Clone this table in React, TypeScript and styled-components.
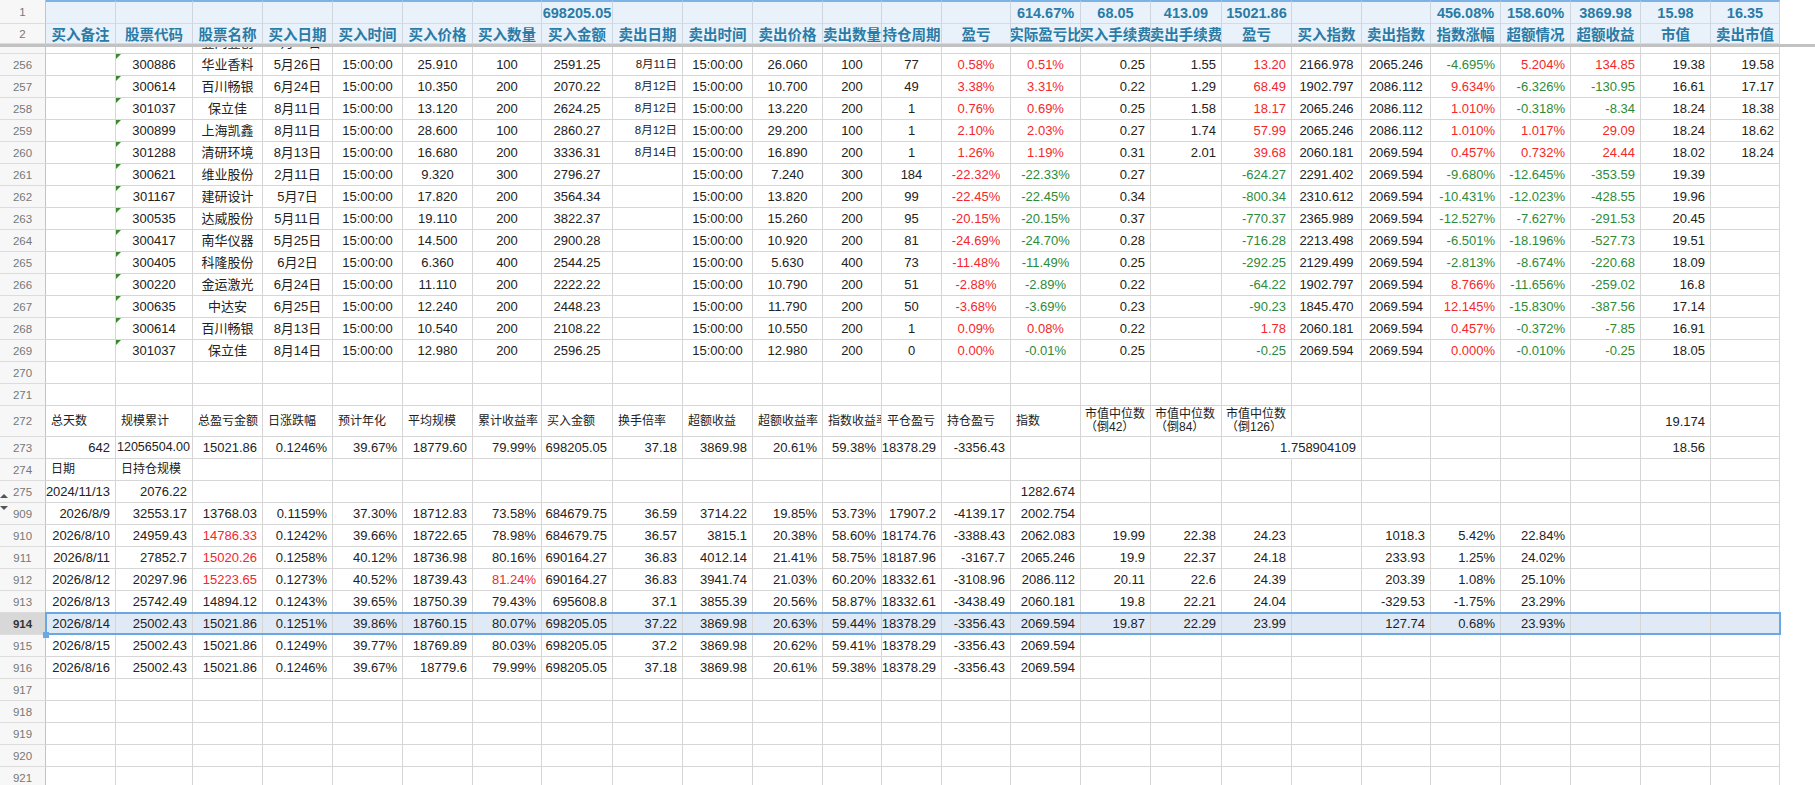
import React from 'react';
import styled, { createGlobalStyle, css } from 'styled-components';

type Align = 'left' | 'center' | 'right';
type Tone = 'red' | 'green';

interface CellSpec {
  v: string;
  align?: Align;
  tone?: Tone;
  size?: number;
  wrap?: boolean;
  flag?: boolean;
  bleed?: boolean;
  open?: boolean;
  tight?: boolean;
}

const LETTERS = 'ABCDEFGHIJKLMNOPQRSTUVWXY'.split('');
const COL_WIDTHS = [70, 77, 70, 70, 70, 70, 69, 71, 70, 70, 70, 59, 60, 69, 70, 70, 71, 70, 70, 69, 70, 70, 70, 70, 69];
const ROW_HEAD = 46;
const TABLE_W = ROW_HEAD + COL_WIDTHS.reduce((a, b) => a + b, 0);
const TEMPLATE = `${ROW_HEAD}px ${COL_WIDTHS.map((w) => `${w}px`).join(' ')}`;

const GRID = '#d6d6d6';
const RED = '#f3272c';
const GREEN = '#2d8a3a';
const HEAD_TEXT = '#2a7ba6';
const HEAD_BG = '#e9f2fb';
const SELECT = '#6aa8e3';
const SELECT_BG = '#e0eaf6';

const GlobalStyle = createGlobalStyle`
  html, body {
    margin: 0;
    padding: 0;
    background: #fff;
  }
  body {
    font-family: "Liberation Sans", Arial, "Noto Sans CJK SC", sans-serif;
    overflow: hidden;
  }
`;

const Sheet = styled.div`
  width: 1815px;
  height: 785px;
  overflow: hidden;
  display: flex;
  flex-direction: column;
  background: #fff;
  color: #222;
`;

const Frozen = styled.div`
  flex: none;
`;

const FreezeLine = styled.div`
  flex: none;
  height: 3px;
  background: #c2c2c2;
`;

const Body = styled.div`
  flex: 1;
  min-height: 0;
  overflow: hidden;
  display: flex;
  flex-direction: column;
`;

const Row = styled.div<{ $h: number; $selected?: boolean; $shift?: number }>`
  flex: none;
  display: grid;
  grid-template-columns: ${TEMPLATE};
  width: ${TABLE_W}px;
  height: ${(p) => p.$h}px;
  margin-top: ${(p) => p.$shift ?? 0}px;
  position: relative;

  ${(p) =>
    p.$selected &&
    css`
      &::after {
        content: '';
        position: absolute;
        left: ${ROW_HEAD - 1}px;
        top: -1px;
        right: -1px;
        bottom: 0;
        border: 2px solid ${SELECT};
        pointer-events: none;
        z-index: 3;
      }
      &::before {
        content: '';
        position: absolute;
        left: ${ROW_HEAD - 3}px;
        bottom: -3px;
        width: 6px;
        height: 6px;
        background: ${SELECT};
        z-index: 4;
      }
    `}
`;

const RowNum = styled.div<{ $active?: boolean; $marker?: 'up' | 'down' }>`
  box-sizing: border-box;
  display: flex;
  align-items: center;
  justify-content: center;
  position: relative;
  background: ${(p) => (p.$active ? '#d8d8d8' : '#f7f7f7')};
  border-right: 1px solid #c4c4c4;
  border-bottom: 1px solid #dcdcdc;
  color: ${(p) => (p.$active ? '#333' : '#777')};
  font-size: 11.5px;
  font-weight: ${(p) => (p.$active ? 700 : 400)};

  ${(p) =>
    p.$marker &&
    css`
      &::before {
        content: '';
        position: absolute;
        left: 0;
        width: 0;
        height: 0;
        border-left: 4px solid transparent;
        border-right: 4px solid transparent;
        ${p.$marker === 'up'
          ? css`
              bottom: 4px;
              border-bottom: 4px solid #555;
            `
          : css`
              top: 3px;
              border-top: 4px solid #555;
            `}
      }
    `}
`;

const justify = (a: Align) => (a === 'left' ? 'flex-start' : a === 'right' ? 'flex-end' : 'center');

const Cell = styled.div<{
  $align: Align;
  $tone?: Tone;
  $size: number;
  $wrap?: boolean;
  $flag?: boolean;
  $bleed?: boolean;
  $open?: boolean;
  $tight?: boolean;
  $selected?: boolean;
}>`
  box-sizing: border-box;
  display: flex;
  align-items: center;
  justify-content: ${(p) => justify(p.$align)};
  position: relative;
  padding: 0 ${(p) => (p.$tight ? 2 : p.$wrap ? 4 : 5)}px;
  background: ${(p) => (p.$selected ? SELECT_BG : '#fff')};
  border-right: 1px solid ${(p) => (p.$open ? 'transparent' : GRID)};
  border-bottom: 1px solid ${GRID};
  color: ${(p) => (p.$tone === 'red' ? RED : p.$tone === 'green' ? GREEN : '#222')};
  font-size: ${(p) => p.$size}px;
  line-height: 13px;
  white-space: ${(p) => (p.$wrap ? 'normal' : 'nowrap')};
  overflow: ${(p) => (p.$bleed ? 'visible' : 'hidden')};

  ${(p) =>
    p.$flag &&
    css`
      &::before {
        content: '';
        position: absolute;
        left: 0;
        top: 0;
        border-top: 5px solid #3b8a2e;
        border-right: 5px solid transparent;
      }
    `}
`;

const HeadCell = styled.div<{ $top?: boolean; $size: number }>`
  box-sizing: border-box;
  display: flex;
  align-items: center;
  justify-content: center;
  overflow: hidden;
  white-space: nowrap;
  background: ${HEAD_BG};
  border-top: ${(p) => (p.$top ? `2px solid #7cb2e4` : 'none')};
  border-right: 1px solid #cdd5de;
  border-bottom: 1px solid #d3dce6;
  color: ${HEAD_TEXT};
  font-size: ${(p) => p.$size}px;
  font-weight: 700;
`;

/* ---------- data ---------- */

const HEAD_VALUES: Record<string, string> = {
  H: '698205.05',
  O: '614.67%',
  P: '68.05',
  Q: '413.09',
  R: '15021.86',
  U: '456.08%',
  V: '158.60%',
  W: '3869.98',
  X: '15.98',
  Y: '16.35',
};

const HEAD_LABELS = [
  '买入备注', '股票代码', '股票名称', '买入日期', '买入时间', '买入价格', '买入数量', '买入金额',
  '卖出日期', '卖出时间', '卖出价格', '卖出数量', '持仓周期', '盈亏', '实际盈亏比', '买入手续费',
  '卖出手续费', '盈亏', '买入指数', '卖出指数', '指数涨幅', '超额情况', '超额收益', '市值', '卖出市值',
];

const TRADE_ALIGN: Align[] = [
  'left', 'center', 'center', 'center', 'center', 'center', 'center', 'center',
  'right', 'center', 'center', 'center', 'center', 'center', 'center', 'right',
  'right', 'right', 'center', 'center', 'right', 'right', 'right', 'right', 'right',
];
// O, R, U, V, W take their colour from the sign; N is always red
const SIGNED = new Set([14, 17, 20, 21, 22]);

const TRADES: [number, string][] = [
  [255, '_ 300792 壹网壹创 7月30日 15:00:00 21.400 100 2140.25 8月10日 15:00:00 21.900 100 11 2.34% 2.26% 0.21 1.56 48.23 2009.771 2062.083 2.603% -0.263% -5.62 17.94 18.36'],
  [256, '_ 300886 华业香料 5月26日 15:00:00 25.910 100 2591.25 8月11日 15:00:00 26.060 100 77 0.58% 0.51% 0.25 1.55 13.20 2166.978 2065.246 -4.695% 5.204% 134.85 19.38 19.58'],
  [257, '_ 300614 百川畅银 6月24日 15:00:00 10.350 200 2070.22 8月12日 15:00:00 10.700 200 49 3.38% 3.31% 0.22 1.29 68.49 1902.797 2086.112 9.634% -6.326% -130.95 16.61 17.17'],
  [258, '_ 301037 保立佳 8月11日 15:00:00 13.120 200 2624.25 8月12日 15:00:00 13.220 200 1 0.76% 0.69% 0.25 1.58 18.17 2065.246 2086.112 1.010% -0.318% -8.34 18.24 18.38'],
  [259, '_ 300899 上海凯鑫 8月11日 15:00:00 28.600 100 2860.27 8月12日 15:00:00 29.200 100 1 2.10% 2.03% 0.27 1.74 57.99 2065.246 2086.112 1.010% 1.017% 29.09 18.24 18.62'],
  [260, '_ 301288 清研环境 8月13日 15:00:00 16.680 200 3336.31 8月14日 15:00:00 16.890 200 1 1.26% 1.19% 0.31 2.01 39.68 2060.181 2069.594 0.457% 0.732% 24.44 18.02 18.24'],
  [261, '_ 300621 维业股份 2月11日 15:00:00 9.320 300 2796.27 _ 15:00:00 7.240 300 184 -22.32% -22.33% 0.27 _ -624.27 2291.402 2069.594 -9.680% -12.645% -353.59 19.39 _'],
  [262, '_ 301167 建研设计 5月7日 15:00:00 17.820 200 3564.34 _ 15:00:00 13.820 200 99 -22.45% -22.45% 0.34 _ -800.34 2310.612 2069.594 -10.431% -12.023% -428.55 19.96 _'],
  [263, '_ 300535 达威股份 5月11日 15:00:00 19.110 200 3822.37 _ 15:00:00 15.260 200 95 -20.15% -20.15% 0.37 _ -770.37 2365.989 2069.594 -12.527% -7.627% -291.53 20.45 _'],
  [264, '_ 300417 南华仪器 5月25日 15:00:00 14.500 200 2900.28 _ 15:00:00 10.920 200 81 -24.69% -24.70% 0.28 _ -716.28 2213.498 2069.594 -6.501% -18.196% -527.73 19.51 _'],
  [265, '_ 300405 科隆股份 6月2日 15:00:00 6.360 400 2544.25 _ 15:00:00 5.630 400 73 -11.48% -11.49% 0.25 _ -292.25 2129.499 2069.594 -2.813% -8.674% -220.68 18.09 _'],
  [266, '_ 300220 金运激光 6月24日 15:00:00 11.110 200 2222.22 _ 15:00:00 10.790 200 51 -2.88% -2.89% 0.22 _ -64.22 1902.797 2069.594 8.766% -11.656% -259.02 16.8 _'],
  [267, '_ 300635 中达安 6月25日 15:00:00 12.240 200 2448.23 _ 15:00:00 11.790 200 50 -3.68% -3.69% 0.23 _ -90.23 1845.470 2069.594 12.145% -15.830% -387.56 17.14 _'],
  [268, '_ 300614 百川畅银 8月13日 15:00:00 10.540 200 2108.22 _ 15:00:00 10.550 200 1 0.09% 0.08% 0.22 _ 1.78 2060.181 2069.594 0.457% -0.372% -7.85 16.91 _'],
  [269, '_ 301037 保立佳 8月14日 15:00:00 12.980 200 2596.25 _ 15:00:00 12.980 200 0 0.00% -0.01% 0.25 _ -0.25 2069.594 2069.594 0.000% -0.010% -0.25 18.05 _'],
];

// "!" marks a value shown in red
const DAILY: [number, string][] = [
  [909, '2026/8/9 32553.17 13768.03 0.1159% 37.30% 18712.83 73.58% 684679.75 36.59 3714.22 19.85% 53.73% 17907.2 -4139.17 2002.754'],
  [910, '2026/8/10 24959.43 !14786.33 0.1242% 39.66% 18722.65 78.98% 684679.75 36.57 3815.1 20.38% 58.60% 18174.76 -3388.43 2062.083 19.99 22.38 24.23 _ 1018.3 5.42% 22.84%'],
  [911, '2026/8/11 27852.7 !15020.26 0.1258% 40.12% 18736.98 80.16% 690164.27 36.83 4012.14 21.41% 58.75% 18187.96 -3167.7 2065.246 19.9 22.37 24.18 _ 233.93 1.25% 24.02%'],
  [912, '2026/8/12 20297.96 !15223.65 0.1273% 40.52% 18739.43 !81.24% 690164.27 36.83 3941.74 21.03% 60.20% 18332.61 -3108.96 2086.112 20.11 22.6 24.39 _ 203.39 1.08% 25.10%'],
  [913, '2026/8/13 25742.49 14894.12 0.1243% 39.65% 18750.39 79.43% 695608.8 37.1 3855.39 20.56% 58.87% 18332.61 -3438.49 2060.181 19.8 22.21 24.04 _ -329.53 -1.75% 23.29%'],
  [914, '2026/8/14 25002.43 15021.86 0.1251% 39.86% 18760.15 80.07% 698205.05 37.22 3869.98 20.63% 59.44% 18378.29 -3356.43 2069.594 19.87 22.29 23.99 _ 127.74 0.68% 23.93%'],
  [915, '2026/8/15 25002.43 15021.86 0.1249% 39.77% 18769.89 80.03% 698205.05 37.2 3869.98 20.62% 59.41% 18378.29 -3356.43 2069.594'],
  [916, '2026/8/16 25002.43 15021.86 0.1246% 39.67% 18779.6 79.99% 698205.05 37.18 3869.98 20.61% 59.38% 18378.29 -3356.43 2069.594'],
];

const SELECTED_ROW = 914;

function tradeRow(s: string): CellSpec[] {
  return s.split(' ').map((raw, i) => {
    const v = raw === '_' ? '' : raw;
    let tone: Tone | undefined;
    if (v && i === 13) tone = 'red';
    if (v && SIGNED.has(i)) tone = v.startsWith('-') ? 'green' : 'red';
    return { v, align: TRADE_ALIGN[i], tone, flag: i === 1, size: i === 8 ? 11.5 : 13 };
  });
}

function dailyRow(s: string): CellSpec[] {
  const vals = s.split(' ');
  return LETTERS.map((_, i) => {
    const raw = vals[i] ?? '_';
    if (raw === '_') return { v: '' };
    const red = raw.startsWith('!');
    return { v: red ? raw.slice(1) : raw, align: 'right' as Align, tone: red ? ('red' as Tone) : undefined };
  });
}

function sparse(entries: Record<string, string | CellSpec>, base: Partial<CellSpec> = {}): CellSpec[] {
  return LETTERS.map((l) => {
    const e = entries[l];
    if (e === undefined) return { v: '' };
    return typeof e === 'string' ? { ...base, v: e } : { ...base, ...e };
  });
}

const blank = () => sparse({});

const label = (v: string): CellSpec => ({ v, align: 'left', size: 12 });
const median = (v: string): CellSpec => ({ v, align: 'left', size: 12, wrap: true });

const TOTAL_LABELS = sparse({
  A: label('总天数'),
  B: label('规模累计'),
  C: label('总盈亏金额'),
  D: label('日涨跌幅'),
  E: label('预计年化'),
  F: label('平均规模'),
  G: label('累计收益率'),
  H: label('买入金额'),
  I: label('换手倍率'),
  J: label('超额收益'),
  K: label('超额收益率'),
  L: label('指数收益率'),
  M: label('平仓盈亏'),
  N: label('持仓盈亏'),
  O: label('指数'),
  P: median('市值中位数（倒42）'),
  Q: median('市值中位数（倒84）'),
  R: median('市值中位数（倒126）'),
  X: '19.174',
}, { align: 'right' });

const TOTAL_VALUES = sparse({
  A: '642',
  B: { v: '12056504.00', size: 12.5, tight: true },
  C: '15021.86',
  D: '0.1246%',
  E: '39.67%',
  F: '18779.60',
  G: '79.99%',
  H: '698205.05',
  I: '37.18',
  J: '3869.98',
  K: '20.61%',
  L: '59.38%',
  M: '18378.29',
  N: '-3356.43',
  R: { v: '', open: true },
  S: { v: '1.758904109', bleed: true },
  X: '18.56',
}, { align: 'right' });

const DAILY_HEAD = sparse({ A: label('日期'), B: label('日持仓规模') });
const DAILY_START = sparse({ A: '2024/11/13', B: '2076.22', O: '1282.674' }, { align: 'right' });

/* ---------- components ---------- */

function DataRow({
  num,
  cells,
  height = 22,
  shift,
  marker,
}: {
  num: number;
  cells: CellSpec[];
  height?: number;
  shift?: number;
  marker?: 'up' | 'down';
}) {
  const selected = num === SELECTED_ROW;
  return (
    <Row $h={height} $selected={selected} $shift={shift}>
      <RowNum $active={selected} $marker={marker}>
        {num}
      </RowNum>
      {cells.map((c, i) => (
        <Cell
          key={i}
          $align={c.align ?? 'right'}
          $tone={c.tone}
          $size={c.size ?? 13}
          $wrap={c.wrap}
          $flag={c.flag}
          $bleed={c.bleed}
          $open={c.open}
          $tight={c.tight}
          $selected={selected}
        >
          {c.v}
        </Cell>
      ))}
    </Row>
  );
}

function HeaderRows() {
  return (
    <Frozen>
      <Row $h={24}>
        <RowNum>1</RowNum>
        {LETTERS.map((l) => (
          <HeadCell key={l} $top $size={14.5}>
            {HEAD_VALUES[l] ?? ''}
          </HeadCell>
        ))}
      </Row>
      <Row $h={20}>
        <RowNum>2</RowNum>
        {HEAD_LABELS.map((t, i) => (
          <HeadCell key={i} $size={14.5}>
            {t}
          </HeadCell>
        ))}
      </Row>
    </Frozen>
  );
}

export default function App() {
  return (
    <>
      <GlobalStyle />
      <Sheet>
        <HeaderRows />
        <FreezeLine />
        <Body>
          {TRADES.map(([n, s], i) => (
            <DataRow key={n} num={n} cells={tradeRow(s)} shift={i === 0 ? -15 : 0} />
          ))}
          <DataRow num={270} cells={blank()} />
          <DataRow num={271} cells={blank()} />
          <DataRow num={272} cells={TOTAL_LABELS} height={31} />
          <DataRow num={273} cells={TOTAL_VALUES} />
          <DataRow num={274} cells={DAILY_HEAD} />
          <DataRow num={275} cells={DAILY_START} marker="up" />
          {DAILY.map(([n, s], i) => (
            <DataRow key={n} num={n} cells={dailyRow(s)} marker={i === 0 ? 'down' : undefined} />
          ))}
          {[917, 918, 919, 920, 921].map((n) => (
            <DataRow key={n} num={n} cells={blank()} />
          ))}
        </Body>
      </Sheet>
    </>
  );
}
